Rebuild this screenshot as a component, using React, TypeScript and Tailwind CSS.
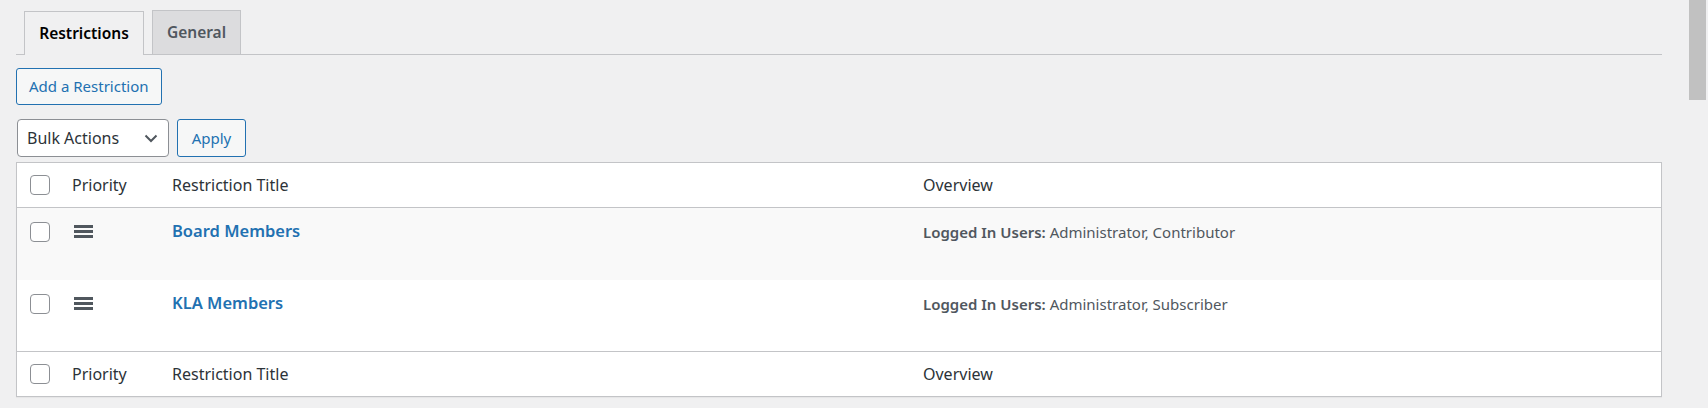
import React from 'react';

const rows = [
  { title: 'Board Members', roles: 'Administrator, Contributor' },
  { title: 'KLA Members', roles: 'Administrator, Subscriber' },
];

const Checkbox: React.FC = () => (
  <span className="block w-[20px] h-[20px] rounded-[4px] border border-[#8c8f94] bg-white" />
);

const DragHandle: React.FC = () => (
  <svg width="19" height="13" viewBox="0 0 19 13" className="block">
    <rect x="0" y="0" width="19" height="3" fill="#50575e" />
    <rect x="0" y="5" width="19" height="3" fill="#50575e" />
    <rect x="0" y="10" width="19" height="3" fill="#50575e" />
  </svg>
);

const HeaderRow: React.FC<{ top?: boolean }> = ({ top }) => (
  <div
    className={`grid grid-cols-[55px_100px_751px_1fr] items-center h-[45px] text-[16px] text-[#2c3338] ${
      top ? 'border-b border-[#c3c4c7]' : 'border-t border-[#c3c4c7]'
    }`}
  >
    <div className="pl-[13px]">
      <Checkbox />
    </div>
    <div>Priority</div>
    <div>Restriction Title</div>
    <div>Overview</div>
  </div>
);

export default function App() {
  return (
    <div className="relative min-h-screen bg-[#f0f0f1] pl-[16px] pr-[46px] font-['Noto_Sans',sans-serif]">
      {/* Tabs */}
      <nav className="flex items-end gap-[8px] pt-[10px] pl-[8px] border-b border-[#c3c4c7]">
        <div className="w-[120px] h-[44px] -mb-px flex items-center justify-center border border-b-0 border-[#c3c4c7] bg-[#f0f0f1] text-[15.5px] font-semibold text-black">
          Restrictions
        </div>
        <div className="w-[89px] h-[44px] flex items-center justify-center border border-b-0 border-[#c3c4c7] bg-[#dcdcde] text-[15.5px] font-semibold text-[#50575e]">
          General
        </div>
      </nav>

      <button className="mt-[13px] h-[37px] px-[12px] rounded-[3px] border border-[#2271b1] bg-[#f6f7f7] text-[15px] text-[#2271b1]">
        Add a Restriction
      </button>

      {/* Bulk actions */}
      <div className="mt-[14px] flex items-center gap-[8px]">
        <div className="ml-px w-[152px] h-[38px] flex items-center justify-between pl-[9px] pr-[10px] rounded-[4px] border border-[#8c8f94] bg-white text-[16px] text-[#2c3338]">
          <span>Bulk Actions</span>
          <svg width="14" height="9" viewBox="0 0 14 9">
            <path d="M1.5 1.5 L7 7 L12.5 1.5" fill="none" stroke="#50575e" strokeWidth="2" />
          </svg>
        </div>
        <button className="w-[69px] h-[38px] rounded-[3px] border border-[#2271b1] bg-[#f6f7f7] text-[15px] text-[#2271b1]">
          Apply
        </button>
      </div>

      {/* Table */}
      <div className="mt-[5px] border border-[#c3c4c7] bg-white shadow-[0_1px_1px_rgba(0,0,0,0.04)]">
        <HeaderRow top />
        {rows.map((r, i) => (
          <div
            key={r.title}
            className={`grid grid-cols-[55px_100px_751px_1fr] items-start h-[71.5px] pt-[14px] ${
              i % 2 === 0 ? 'bg-[#f9f9f9]' : 'bg-white'
            }`}
          >
            <div className="pl-[13px]">
              <Checkbox />
            </div>
            <div className="pt-[3px] pl-[2px]">
              <DragHandle />
            </div>
            <div className="-mt-[3px] text-[16.5px] font-semibold text-[#2271b1]">{r.title}</div>
            <div className="-mt-[1px] text-[15px] text-[#50575e]">
              <span className="font-semibold">Logged In Users:</span> {r.roles}
            </div>
          </div>
        ))}
        <HeaderRow />
      </div>

      {/* Scrollbar thumb */}
      <div className="absolute top-0 right-[2px] w-[17px] h-[100px] bg-[#c1c1c1]" />
    </div>
  );
}
